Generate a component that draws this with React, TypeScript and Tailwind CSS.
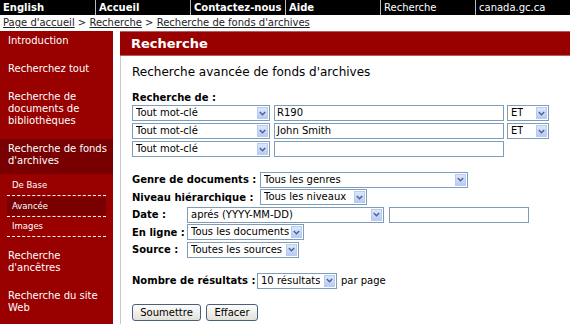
import React from "react"

const topLinks = [
  { label: "English", bold: true },
  { label: "Accueil", bold: true },
  { label: "Contactez-nous", bold: true },
  { label: "Aide", bold: true },
  { label: "Recherche", bold: false },
  { label: "canada.gc.ca", bold: false },
]

function Arrow() {
  return (
    <span className="ml-auto mr-[1px] flex h-[calc(100%-2px)] w-[11px] shrink-0 items-center justify-center border border-[#b8cbf3] bg-linear-to-b from-[#dce7fd] to-[#b7cbf7]">
      <svg width="7" height="5" viewBox="0 0 7 5">
        <polyline points="0.8,1 3.5,3.8 6.2,1" fill="none" stroke="#4d6185" strokeWidth="1.4" />
      </svg>
    </span>
  )
}

function Select({ value, w }: { value: string; w: string }) {
  return (
    <div className={`flex h-[16px] shrink-0 items-center border border-[#7f9db9] bg-white pl-[3px] leading-[14px] ${w}`}>
      <span className="truncate">{value}</span>
      <Arrow />
    </div>
  )
}

function Input({ value, w }: { value?: string; w: string }) {
  return (
    <div className={`h-[16px] shrink-0 border border-[#7f9db9] bg-white pl-[2px] leading-[14px] ${w}`}>
      {value}
    </div>
  )
}

function SideItem({ children }: { children: React.ReactNode }) {
  return <div className="mb-[4px] whitespace-nowrap pb-[8px] pl-[8px] pt-[4px] leading-[12px]">{children}</div>
}

export default function App() {
  return (
    <div className="h-[324px] w-[570px] overflow-hidden bg-white font-['DejaVu_Sans',sans-serif] text-[10px] text-black">
      <div className="grid h-[15px] grid-cols-6 bg-black text-white">
        {topLinks.map((l, i) => (
          <div
            key={l.label}
            className={`pl-[3px] leading-[15px] ${i > 0 ? "border-l border-[#bbbbbb] pl-[2px]" : ""} ${l.bold ? "font-bold" : ""}`}
          >
            {l.label}
          </div>
        ))}
      </div>

      <div className="h-[16px] pl-[3px] leading-[15px] text-[#222]">
        <span className="underline">Page d'accueil</span> &gt; <span className="underline">Recherche</span> &gt;{" "}
        <span className="underline">Recherche de fonds d'archives</span>
      </div>

      <div className="flex h-[293px]">
        <nav className="w-[113px] shrink-0 bg-[#990000] text-white">
          <SideItem>Introduction</SideItem>
          <SideItem>Recherchez tout</SideItem>
          <SideItem>
            Recherche de
            <br />
            documents de
            <br />
            bibliothèques
          </SideItem>
          <div className="mb-[2px] whitespace-nowrap bg-[#780000] pb-[7px] pl-[8px] pt-[4px] leading-[12px]">
            Recherche de fonds
            <br />
            d'archives
          </div>
          <div className="mx-[7px] text-[8.5px]">
            <div className="border-b border-dashed border-white pl-[5px] leading-[19px]">De Base</div>
            <div className="border-b border-dashed border-white py-[1px]">
              <div className="bg-[#780000] pl-[5px] leading-[18px]">Avancée</div>
            </div>
            <div className="border-b border-dashed border-white pl-[5px] leading-[19px]">Images</div>
          </div>
          <div className="h-[9px]" />
          <SideItem>
            Recherche
            <br />
            d'ancêtres
          </SideItem>
          <SideItem>
            Recherche du site
            <br />
            Web
          </SideItem>
        </nav>

        <main className="ml-[7px] flex-1">
          <div className="flex h-[25px] items-center border-y border-[#b06060] bg-[#990000] pl-[11px] text-[13px] font-bold text-white">
            Recherche
          </div>
          <div className="h-full border-l border-[#c8c8c8] pl-[11px]">
            <h1 className="pt-[9px] text-[12px] leading-[14px]">Recherche avancée de fonds d'archives</h1>

            <div className="mt-[13px] font-bold leading-[12px]">Recherche de :</div>
            <div className="mt-[1px] flex flex-col gap-[2px]">
              <div className="flex items-center">
                <Select value="Tout mot-clé" w="w-[138px]" />
                <Input value="R190" w="ml-[4px] w-[230px]" />
                <Select value="ET" w="ml-[3px] w-[42px]" />
              </div>
              <div className="flex items-center">
                <Select value="Tout mot-clé" w="w-[138px]" />
                <Input value="John Smith" w="ml-[4px] w-[230px]" />
                <Select value="ET" w="ml-[3px] w-[42px]" />
              </div>
              <div className="flex items-center">
                <Select value="Tout mot-clé" w="w-[138px]" />
                <Input w="ml-[4px] w-[230px]" />
              </div>
            </div>

            <div className="mt-[14px] flex flex-col">
              <div className="flex h-[17.5px] items-center">
                <span className="w-[128px] font-bold">Genre de documents :</span>
                <Select value="Tous les genres" w="w-[208px]" />
              </div>
              <div className="flex h-[17.5px] items-center">
                <span className="w-[128px] font-bold">Niveau hiérarchique :</span>
                <Select value="Tous les niveaux" w="w-[107px]" />
              </div>
              <div className="flex h-[17.5px] items-center">
                <span className="w-[55px] font-bold">Date :</span>
                <Select value="aprés (YYYY-MM-DD)" w="w-[197px]" />
                <Input w="ml-[5px] w-[140px]" />
              </div>
              <div className="flex h-[17.5px] items-center">
                <span className="w-[55px] font-bold">En ligne :</span>
                <Select value="Tous les documents" w="w-[117px]" />
              </div>
              <div className="flex h-[17.5px] items-center">
                <span className="w-[55px] font-bold">Source :</span>
                <Select value="Toutes les sources" w="w-[112px]" />
              </div>
            </div>

            <div className="mt-[14px] flex items-center">
              <span className="w-[125px] font-bold">Nombre de résultats :</span>
              <Select value="10 résultats" w="w-[80px]" />
              <span className="ml-[4px]">par page</span>
            </div>

            <div className="mt-[15px] flex gap-[5px]">
              <button className="h-[17px] w-[69px] rounded-[3px] border border-[#4a5f7f] bg-linear-to-b from-[#fdfdfb] to-[#e2e1da] leading-[15px]">
                Soumettre
              </button>
              <button className="h-[17px] w-[52px] rounded-[3px] border border-[#4a5f7f] bg-linear-to-b from-[#fdfdfb] to-[#e2e1da] leading-[15px]">
                Effacer
              </button>
            </div>
          </div>
        </main>
      </div>
    </div>
  )
}
